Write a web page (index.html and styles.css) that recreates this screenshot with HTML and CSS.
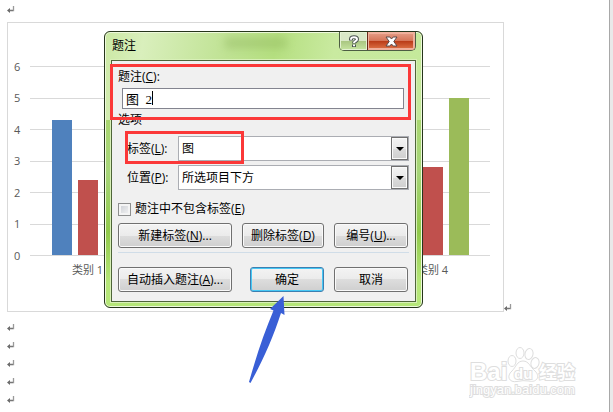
FILE: index.html
```html
<!DOCTYPE html>
<html lang="zh-CN">
<head>
<meta charset="utf-8">
<title>题注</title>
<link rel="stylesheet" href="styles.css">
</head>
<body>
<svg class="defs" aria-hidden="true">
  <symbol id="mark" viewBox="0 0 8 8"><path d="M6.500 0V4.500H2" fill="none" stroke="#999" stroke-width="1.300"/><path d="M0 4.500 3 2V7z" fill="#666"/><path d="M2 4.500H6" stroke="#777" stroke-width="1.200"/></symbol>
</svg>
<main class="document">
  <p class="para first"><svg class="mark"><use href="#mark"/></svg></p>
  <div class="figure-line">
    <figure class="chart">
      <div class="plot">
        <div class="tick"><span>6</span></div>
        <div class="tick"><span>5</span></div>
        <div class="tick"><span>4</span></div>
        <div class="tick"><span>3</span></div>
        <div class="tick"><span>2</span></div>
        <div class="tick"><span>1</span></div>
        <div class="tick"><span>0</span></div>
        <div class="bars">
          <div class="group"><i class="blue" style="height:71.6%"></i><i class="red" style="height:40%"></i><i class="green" style="height:33.3%"></i></div>
          <div class="group"><i class="blue" style="height:41.6%"></i><i class="red" style="height:73.3%"></i><i class="green" style="height:33.3%"></i></div>
          <div class="group"><i class="blue" style="height:58.3%"></i><i class="red" style="height:30%"></i><i class="green" style="height:50%"></i></div>
          <div class="group"><i class="blue" style="height:75%"></i><i class="red" style="height:46.6%"></i><i class="green" style="height:83.3%"></i></div>
        </div>
      </div>
      <div class="categories"><span>类别 1</span><span></span><span></span><span>类别 4</span></div>
    </figure>
    <svg class="mark"><use href="#mark"/></svg>
  </div>
  <div class="paras">
    <p class="para"><svg class="mark"><use href="#mark"/></svg></p>
    <p class="para"><svg class="mark"><use href="#mark"/></svg></p>
    <p class="para"><svg class="mark"><use href="#mark"/></svg></p>
    <p class="para"><svg class="mark"><use href="#mark"/></svg></p>
    <p class="para"><svg class="mark"><use href="#mark"/></svg></p>
  </div>
</main>

<form class="dialog" role="dialog" aria-labelledby="dialog-title">
  <header class="titlebar">
    <h1 id="dialog-title">题注</h1>
    <div class="window-buttons">
      <button type="button" class="help" aria-label="帮助"><svg width="12" height="13" viewBox="0 0 12 13" fill="none"><path d="M3 5.500V4C3 1.500 9 1.500 9 4.300C9 6.300 6 6 6 8.500M6 9.500V12" stroke="#4b5551" stroke-width="4"/><path d="M3 4.800V4C3 1.500 9 1.500 9 4.300C9 6.300 6 6 6 8M6 9.500V11.300" stroke="#fff" stroke-width="2"/></svg></button>
      <button type="button" class="close" aria-label="关闭"><svg width="13" height="11" viewBox="0 0 13 11"><path d="M1 1H4.800L6.500 3 8.200 1H12L8.800 5.500 12 10H8.200L6.500 8 4.800 10H1L4.200 5.500z" fill="#fff" stroke="#5a4a4a"/></svg></button>
    </div>
  </header>
  <div class="content">
    <label class="caption-label" for="caption">题注(<u>C</u>):</label>
    <div class="caption-field"><input id="caption" type="text" value="图  2"><span class="caret"></span></div>
    <h2>选项</h2>
    <div class="field">
      <label for="label-kind">标签(<u>L</u>):</label>
      <div class="combo"><select id="label-kind"><option>图</option></select><span class="drop"></span></div>
    </div>
    <div class="field">
      <label for="position">位置(<u>P</u>):</label>
      <div class="combo"><select id="position"><option>所选项目下方</option></select><span class="drop"></span></div>
    </div>
    <label class="check"><input type="checkbox"><span>题注中不包含标签(<u>E</u>)</span></label>
    <div class="buttons">
      <button type="button" class="wide">新建标签(<u>N</u>)...</button>
      <button type="button" class="medium">删除标签(<u>D</u>)</button>
      <button type="button" class="small">编号(<u>U</u>)...</button>
    </div>
    <div class="buttons actions">
      <button type="button" class="wide">自动插入题注(<u>A</u>)...</button>
      <button type="submit" class="small default">确定</button>
      <button type="button" class="small">取消</button>
    </div>
  </div>
  <div class="highlight caption-highlight"></div>
  <div class="highlight label-highlight"></div>
  <svg class="arrow" width="38" height="89" viewBox="0 0 38 89" aria-hidden="true"><path d="M35.500 1 22 14 25.500 15.500C16 38 8 62 1 87L2.500 88C15 65 25 43 33 18L36.500 20z" fill="#395fd6"/></svg>
</form>

<svg class="watermark" width="112" height="56" viewBox="0 0 112 56">
  <g fill="#fff" stroke="#dedede">
    <ellipse cx="43" cy="16" rx="4" ry="5.500"/><ellipse cx="51" cy="8" rx="4" ry="5.500"/><ellipse cx="60" cy="9" rx="4" ry="5.500" transform="rotate(12 60 9)"/><ellipse cx="66" cy="18" rx="4" ry="5.500" transform="rotate(15 66 18)"/>
    <path d="M54 16C60 16 61 22 66 26C72 32 67 38 60 36Q54 35 48 36.500C40 38 37 31 43 26C47 22 48 16 54 16z"/>
    <text class="latin" x="1" y="35">Bai</text>
    <text class="du" x="45" y="34">du</text>
    <text class="cjk" x="70" y="34">经验</text>
    <text class="url" x="1" y="49">jingyan.baidu.com</text>
  </g>
</svg>
</body>
</html>
```
FILE: styles.css
```css
* { box-sizing: border-box; }

body {
  margin: 0;
  min-height: 100vh;
  position: relative;
  display: flex;
  padding-right: 3px;
  background: #e9e9e9;
  color: #000;
  font: 12px/16px "Open Sans", "Noto Sans CJK SC", sans-serif;
  overflow: hidden;
}

.defs { position: absolute; width: 0; height: 0; }

/* Document */
.document {
  flex: 1;
  padding: 0 0 0 7px;
  background: #fff;
  border-right: 1px solid #a8a8a8;
}

.mark { display: block; width: 8px; height: 8px; flex: none; }

.para { margin: 0; height: 18px; display: flex; align-items: center; }
.para.first { height: 22px; padding-bottom: 2px; }
.paras { padding-top: 7px; }

.figure-line { display: flex; align-items: flex-end; padding-right: 97px; }

.chart {
  flex: 1;
  margin: 0;
  height: 290px;
  padding: 28px 13px 0 6px;
  border: 1px solid #d9d9d9;
  color: #595959;
  font-size: 11px;
}

.plot {
  position: relative;
  height: 220px;
  display: flex;
  flex-direction: column;
  justify-content: space-between;
}

.tick { display: flex; align-items: center; height: 31px; }
.tick span { width: 16px; }
.tick::after { content: ""; flex: 1; height: 1px; background: #d9d9d9; }

.bars {
  position: absolute;
  left: 16px;
  right: 0;
  top: 16px;
  bottom: 16px;
  display: flex;
}

.group { flex: 1; display: flex; justify-content: center; align-items: flex-end; gap: 6px; }
.group i { width: 20px; }
.blue { background: #4f81bd; }
.red { background: #c0504d; }
.green { background: #9bbb59; }

.categories { display: flex; padding-left: 16px; line-height: 16px; margin-top: -9px; }
.categories span { flex: 1; text-align: center; }

/* Dialog */
.dialog {
  position: absolute;
  left: 104px;
  top: 31px;
  width: 319px;
  padding: 0 6px 5px;
  border: 1px solid #26351b;
  border-radius: 6px;
  background: linear-gradient(100deg, #cbe9a4 0, #d9efbc 12%, #bfe293 38%, #b5df80 52%, #c9eaa0 70%, #c4e99a) 0 0 / 100% 88px no-repeat,
    linear-gradient(#a9d670 88px, #a6d579 140px, #90c94a 200px, #b5e678 250px);
  box-shadow: inset 0 0 0 1px #eef9dc;
}

.titlebar {
  position: relative;
  height: 28px;
  display: flex;
  justify-content: space-between;
}

.titlebar::before {
  content: "";
  position: absolute;
  left: 114px;
  top: 6px;
  width: 62px;
  height: 10px;
  background: #89af57;
  opacity: .4;
  filter: blur(4px);
}

h1, h2 { margin: 0; font-size: 12px; font-weight: 400; }
h1 { padding: 6px 0 0 1px; }

.window-buttons {
  display: flex;
  height: 19px;
  border: 1px solid #4d5d43;
  border-top: 0;
  border-radius: 0 0 5px 5px;
  overflow: hidden;
}

.window-buttons button {
  display: flex;
  align-items: center;
  justify-content: center;
  padding: 0;
  border: 0;
}

.help { width: 27px; background: linear-gradient(#d9e8c7 50%, #a9c681 50%, #c6e4a0); box-shadow: inset 0 0 0 1px #e4f2d3; }
.close { width: 48px; background: linear-gradient(#e7a18b, #d47457 50%, #b93a16 50%, #e1784c); box-shadow: inset 1px 0 #682818, inset 0 0 0 2px #efb09c; }

.content {
  border: 1px solid #4e6539;
  background: #f0f0f0;
  box-shadow: 0 0 0 1px #d8f0b7;
  padding: 8px 6px 9px;
}

.caption-label { display: block; }

.caption-field { position: relative; margin: 3px 5px 3px 4px; }

.caption-field input {
  display: block;
  width: 100%;
  height: 21px;
  padding: 0 3px;
  border: 1px solid #83848f;
  border-radius: 0;
  background: #fff;
  color: #000;
  font: 13px/16px "Liberation Serif", "Noto Sans CJK SC", serif;
  white-space: pre;
  outline: 0;
}

.caret { position: absolute; left: 30px; top: 3px; width: 1px; height: 14px; background: #000; }

.field { display: flex; align-items: center; padding-left: 9px; margin-bottom: 4px; }
.field label { width: 51px; }
h2 + .field { margin-top: 8px; }

.combo { position: relative; flex: 1; }

.combo select {
  display: block;
  appearance: none;
  width: 100%;
  height: 25px;
  padding: 0 20px 0 3px;
  border: 1px solid #abadb3;
  border-radius: 0;
  background: #fff;
  color: #000;
  font: inherit;
}

.drop {
  position: absolute;
  right: 1px;
  top: 1px;
  bottom: 1px;
  width: 17px;
  border: 1px solid #707070;
  background: linear-gradient(#f3f3f3, #e9e9e9 50%, #dcdcdc 50%, #cfcfcf);
  box-shadow: inset 0 0 0 1px #fafafa;
  pointer-events: none;
  display: flex;
  align-items: center;
  justify-content: center;
}

.drop::after { content: ""; border: 4px solid transparent; border-top-color: #000; border-bottom: 0; }

.check { display: flex; align-items: center; gap: 4px; height: 16px; margin: 11px 0 6px; }

.check input {
  appearance: none;
  width: 13px;
  height: 13px;
  margin: 0;
  border: 1px solid #8e8f8f;
  background: linear-gradient(135deg, #c9ccd2, #f6f6f6);
  box-shadow: inset 0 0 0 2px #f4f4f4;
}

.buttons { display: flex; justify-content: space-between; padding-right: 1px; }

.buttons button {
  height: 25px;
  padding: 0;
  border: 1px solid #707070;
  border-radius: 3px;
  background: linear-gradient(#f3f3f3, #ebebeb 50%, #dddddd 50%, #cfcfcf);
  box-shadow: inset 0 0 0 1px #fafafa;
  color: #000;
  font: inherit;
}

.buttons .wide { width: 114px; }
.buttons .medium { width: 82px; }
.buttons .small { width: 74px; }

.buttons .default { border-color: #3c7fb1; box-shadow: inset 0 0 0 1px #46c8f5; }

.actions { margin-top: 4px; padding-top: 14px; border-top: 1px solid #d0dde8; }
.actions .wide { margin-right: 8px; }

/* Annotations over the dialog */
.highlight { position: absolute; border: 3px solid #fb3838; pointer-events: none; }
.caption-highlight { left: 5px; top: 32px; width: 301px; height: 56px; }
.label-highlight { left: 20px; top: 99px; width: 119px; height: 33px; }
.arrow { position: absolute; left: 143px; top: 263px; pointer-events: none; }

.watermark { position: absolute; right: 32px; bottom: 11px; stroke-width: 1; }
.watermark text { paint-order: stroke; stroke-width: 2px; }
.latin { font: 700 24px "Liberation Sans", sans-serif; }
.du { font: 700 15px "Liberation Sans", sans-serif; }
.cjk { font: 700 18px "Noto Sans CJK SC", sans-serif; }
.url { font: 13px "Liberation Sans", sans-serif; }
```
